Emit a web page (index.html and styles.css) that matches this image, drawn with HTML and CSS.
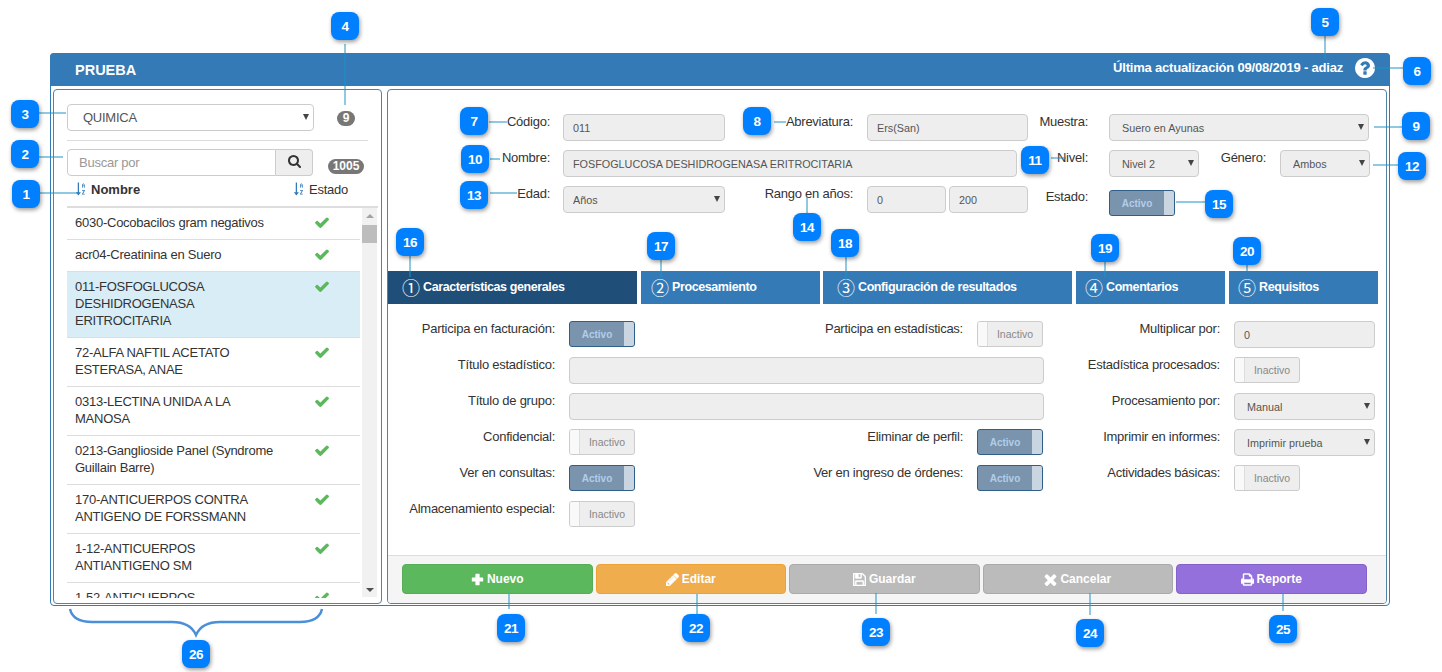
FILE: index.html
```html
<!DOCTYPE html>
<html>

<head>
	<meta charset="UTF-8">
	<title>Prueba</title>
	<link rel="stylesheet" href="styles.css">
</head>

<body>
	<svg class="defs" width="0" height="0">
		<symbol id="i-plus" viewBox="0 0 16 16"><path d="M6 1h4a.6.6 0 0 1 .6.6V5.400h3.800a.6.6 0 0 1 .6.6v4a.6.6 0 0 1-.6.6h-3.800v3.800a.6.6 0 0 1-.6.6H6a.6.6 0 0 1-.6-.6v-3.800H1.600A.6.6 0 0 1 1 10V6a.6.6 0 0 1 .6-.6h3.800V1.600A.6.6 0 0 1 6 1z" /></symbol>
		<symbol id="i-pencil" viewBox="0 0 1536 1536"><path d="M363 1408l91-91-235-235-91 91v107h128v128h107zm523-928q0-22-22-22-10 0-17 7l-542 542q-7 7-7 17 0 22 22 22 10 0 17-7l542-542q7-7 7-17zm-54-192l416 416-832 832h-416v-416zm683 96q0 53-37 90l-166 166-416-416 166-165q36-38 90-38 53 0 91 38l235 234q37 39 37 91z" /></symbol>
		<symbol id="i-save" viewBox="128 128 1536 1536"><path d="M512 1536h768v-384h-768v384zm896 0h128v-896q0-14-10-38.500t-20-34.500l-281-281q-10-10-34-20t-39-10v416q0 40-28 68t-68 28h-576q-40 0-68-28t-28-68v-416h-128v1280h128v-416q0-40 28-68t68-28h832q40 0 68 28t28 68v416zm-384-928v-320q0-13-9.500-22.500t-22.500-9.500h-192q-13 0-22.500 9.500t-9.500 22.500v320q0 13 9.500 22.500t22.500 9.500h192q13 0 22.500-9.500t9.500-22.500zm640 32v928q0 40-28 68t-68 28h-1344q-40 0-68-28t-28-68v-1344q0-40 28-68t68-28h928q40 0 88 20t76 48l280 280q28 28 48 76t20 88z" /></symbol>
		<symbol id="i-times" viewBox="240 240 1312 1312"><path d="M1490 1322q0 40-28 68l-136 136q-28 28-68 28t-68-28l-294-294-294 294q-28 28-68 28t-68-28l-136-136q-28-28-28-68t28-68l294-294-294-294q-28-28-28-68t28-68l136-136q28-28 68-28t68 28l294 294 294-294q28-28 68-28t68 28l136 136q28 28 28 68t-28 68l-294 294 294 294q28 28 28 68z" /></symbol>
		<symbol id="i-print" viewBox="64 128 1664 1536"><path d="M448 1536h896v-256h-896v256zm0-640h896v-384h-160q-40 0-68-28t-28-68v-160h-640v640zm1152 64q0-26-19-45t-45-19-45 19-19 45 19 45 45 19 45-19 19-45zm128 0v416q0 13-9.500 22.500t-22.500 9.500h-224v160q0 40-28 68t-68 28h-960q-40 0-68-28t-28-68v-160h-224q-13 0-22.500-9.500t-9.500-22.500v-416q0-79 56.500-135.500t135.500-56.500h64v-544q0-40 28-68t68-28h672q40 0 88 20t76 48l152 152q28 28 48 76t20 88v256h64q79 0 135.500 56.500t56.500 135.500z" /></symbol>
		<symbol id="i-search" viewBox="64 128 1664 1664"><path d="M1216 832q0-185-131.500-316.500t-316.500-131.500-316.500 131.500-131.500 316.500 131.500 316.500 316.500 131.500 316.500-131.500 131.500-316.500zm512 832q0 52-38 90t-90 38q-54 0-90-38l-343-342q-179 124-399 124-143 0-273.500-55.500t-225-150-150-225-55.500-273.500 55.500-273.500 150-225 225-150 273.500-55.500 273.500 55.500 225 150 150 225 55.500 273.500q0 220-124 399l343 343q37 37 37 90z" /></symbol>
		<symbol id="i-check" viewBox="120 300 1552 1200"><path d="M1671 566q0 40-28 68l-724 724-136 136q-28 28-68 28t-68-28l-136-136-362-362q-28-28-28-68t28-68l136-136q28-28 68-28t68 28l294 295 656-657q28-28 68-28t68 28l136 136q28 28 28 68z" /></symbol>
		<symbol id="i-help" viewBox="128 128 1536 1536"><path d="M1024 1376v-192q0-14-9-23t-23-9h-192q-14 0-23 9t-9 23v192q0 14 9 23t23 9h192q14 0 23-9t9-23zm256-672q0-88-55.500-163t-138.500-116-170-41q-243 0-371 213-15 24 8 42l132 100q7 6 19 6 16 0 25-12 53-68 86-92 34-24 86-24 48 0 85.500 26t37.500 59q0 38-20 61t-68 45q-63 28-115.500 86.500t-52.500 125.500v36q0 14 9 23t23 9h192q14 0 23-9t9-23q0-19 21.500-49.500t54.500-49.500q32-18 49-28.500t46-35 44.500-48 28-60.500 12.500-81zm384 192q0 209-103 385.500t-279.500 279.500-385.500 103-385.500-103-279.500-279.500-103-385.500 103-385.500 279.500-279.500 385.500-103 385.500 103 279.500 279.500 103 385.500z" /></symbol>
		<symbol id="i-sort" viewBox="0 0 12 14"><path d="M3 0h1.400v10.500H6.500L3.700 14 .9 10.500H3z" /><path d="M7.700 5.500V2.300L8.800 1h.8l1 1.300v3.200h-.8V4H8.500v1.500zM8.500 3.200h1.300v-.6l-.4-.7h-.5l-.4.7zM7.700 8h3v.9L8.800 12.200h1.900v.8h-3v-.9l1.900-3.300H7.700z" /></symbol>
	</svg>

	<div class="window">
		<div class="window-head">
			<span class="window-title">PRUEBA</span>
			<span class="window-info">Última actualización 09/08/2019 - adiaz</span>
			<svg class="help-icon"><use href="#i-help" /></svg>
		</div>
		<div class="window-body">
			<!-- lista de pruebas -->
			<div class="side">
				<div class="side-row">
					<div class="select side-select"><select><option>QUIMICA</option></select></div>
					<span class="badge badge-small">9</span>
				</div>
				<hr class="side-line">
				<div class="side-row">
					<div class="search">
						<input type="text" placeholder="Buscar por">
						<button><svg class="search-icon"><use href="#i-search" /></svg></button>
					</div>
					<span class="badge badge-big">1005</span>
				</div>
				<div class="list-head">
					<span class="list-name"><svg class="sort-icon"><use href="#i-sort" /></svg><b>Nombre</b></span>
					<span class="list-state"><svg class="sort-icon"><use href="#i-sort" /></svg>Estado</span>
				</div>
				<div class="list-wrap">
					<div class="list">
						<div class="item"><span>6030-Cocobacilos gram negativos</span><svg class="check"><use href="#i-check" /></svg></div>
						<div class="item"><span>acr04-Creatinina en Suero</span><svg class="check"><use href="#i-check" /></svg></div>
						<div class="item selected"><span>011-FOSFOGLUCOSA DESHIDROGENASA ERITROCITARIA</span><svg class="check"><use href="#i-check" /></svg></div>
						<div class="item"><span>72-ALFA NAFTIL ACETATO ESTERASA, ANAE</span><svg class="check"><use href="#i-check" /></svg></div>
						<div class="item"><span>0313-LECTINA UNIDA A LA MANOSA</span><svg class="check"><use href="#i-check" /></svg></div>
						<div class="item"><span>0213-Ganglioside Panel (Syndrome Guillain Barre)</span><svg class="check"><use href="#i-check" /></svg></div>
						<div class="item"><span>170-ANTICUERPOS CONTRA ANTIGENO DE FORSSMANN</span><svg class="check"><use href="#i-check" /></svg></div>
						<div class="item"><span>1-12-ANTICUERPOS ANTIANTIGENO SM</span><svg class="check"><use href="#i-check" /></svg></div>
						<div class="item"><span>1-52-ANTICUERPOS ANTINUCLEARES</span><svg class="check"><use href="#i-check" /></svg></div>
					</div>
					<div class="scrollbar">
						<span class="arrow-up"></span>
						<span class="thumb"></span>
						<span class="arrow-down"></span>
					</div>
				</div>
			</div>

			<!-- detalle de la prueba -->
			<div class="main">
				<div class="form-top">
					<label class="lb-a">Código:</label>
					<input type="text" value="011" disabled>
					<label class="lb-b">Abreviatura:</label>
					<input type="text" value="Ers(San)" disabled>
					<label class="lb-c">Muestra:</label>
					<div class="select"><select disabled><option>Suero en Ayunas</option></select></div>

					<label class="lb-a">Nombre:</label>
					<input class="name-input" type="text" value="FOSFOGLUCOSA DESHIDROGENASA ERITROCITARIA" disabled>
					<label class="lb-c">Nivel:</label>
					<div class="pair">
						<div class="select small-select"><select disabled><option>Nivel 2</option></select></div>
						<label class="gender-label">Género:</label>
						<div class="select small-select"><select disabled><option>Ambos</option></select></div>
					</div>

					<label class="lb-a">Edad:</label>
					<div class="select age-select"><select disabled><option>Años</option></select></div>
					<label class="lb-b">Rango en años:</label>
					<div class="range">
						<input type="text" value="0" disabled>
						<input type="text" value="200" disabled>
					</div>
					<label class="lb-c state-label">Estado:</label>
					<div class="switch on state-switch"><span>Activo</span><i></i></div>
				</div>

				<div class="tabs">
					<div class="tab tab-1 active"><span class="num">①</span>Características generales</div>
					<div class="tab tab-2"><span class="num">②</span>Procesamiento</div>
					<div class="tab tab-3"><span class="num">③</span>Configuración de resultados</div>
					<div class="tab tab-4"><span class="num">④</span>Comentarios</div>
					<div class="tab tab-5"><span class="num">⑤</span>Requisitos</div>
				</div>

				<div class="form-tab">
					<label>Participa en facturación:</label>
					<div class="switch on"><span>Activo</span><i></i></div>
					<label>Participa en estadísticas:</label>
					<div class="switch off"><i></i><span>Inactivo</span></div>
					<label>Multiplicar por:</label>
					<input type="text" value="0" disabled>

					<label>Título estadístico:</label>
					<input class="wide" type="text" disabled>
					<label>Estadística procesados:</label>
					<div class="switch off"><i></i><span>Inactivo</span></div>

					<label>Título de grupo:</label>
					<input class="wide" type="text" disabled>
					<label>Procesamiento por:</label>
					<div class="select"><select disabled><option>Manual</option></select></div>

					<label>Confidencial:</label>
					<div class="switch off"><i></i><span>Inactivo</span></div>
					<label>Eliminar de perfil:</label>
					<div class="switch on"><span>Activo</span><i></i></div>
					<label>Imprimir en informes:</label>
					<div class="select"><select disabled><option>Imprimir prueba</option></select></div>

					<label>Ver en consultas:</label>
					<div class="switch on"><span>Activo</span><i></i></div>
					<label>Ver en ingreso de órdenes:</label>
					<div class="switch on"><span>Activo</span><i></i></div>
					<label>Actividades básicas:</label>
					<div class="switch off"><i></i><span>Inactivo</span></div>

					<label>Almacenamiento especial:</label>
					<div class="switch off"><i></i><span>Inactivo</span></div>
				</div>

				<div class="actions">
					<button class="btn green"><svg><use href="#i-plus" /></svg>Nuevo</button>
					<button class="btn orange"><svg class="thick"><use href="#i-pencil" /></svg>Editar</button>
					<button class="btn grey"><svg class="thick"><use href="#i-save" /></svg>Guardar</button>
					<button class="btn grey"><svg><use href="#i-times" /></svg>Cancelar</button>
					<button class="btn purple"><svg class="thick"><use href="#i-print" /></svg>Reporte</button>
				</div>
			</div>
		</div>
	</div>

	<!-- anotaciones sobre la captura -->
	<svg class="wires" width="1442" height="672">
		<path d="M40 193H78M39 157H63M39 113H66M345 44V105M1325 36V60M1373 68H1403M489 122H507M774 122H786M1374 127H1403M490 159H500M1051 158H1066M1373 165H1398M490 193H517M807 197V213M1176 202H1205M410 255V277M661 260V277M846 257V280M1105 262V277M1247 265V271M509 594V609M697 594V614M876 593V614M1090 593V615M1283 593V611" />
		<path class="brace" d="M70 609C72 618 80 622 92 622H172C184 622 192 626 196 635C200 626 208 622 220 622H300C312 622 320 618 322 609" />
	</svg>
	<span class="pin p1">1</span>
	<span class="pin p2">2</span>
	<span class="pin p3">3</span>
	<span class="pin p4">4</span>
	<span class="pin p5">5</span>
	<span class="pin p6">6</span>
	<span class="pin p7">7</span>
	<span class="pin p8">8</span>
	<span class="pin p9">9</span>
	<span class="pin p10">10</span>
	<span class="pin p11">11</span>
	<span class="pin p12">12</span>
	<span class="pin p13">13</span>
	<span class="pin p14">14</span>
	<span class="pin p15">15</span>
	<span class="pin p16">16</span>
	<span class="pin p17">17</span>
	<span class="pin p18">18</span>
	<span class="pin p19">19</span>
	<span class="pin p20">20</span>
	<span class="pin p21">21</span>
	<span class="pin p22">22</span>
	<span class="pin p23">23</span>
	<span class="pin p24">24</span>
	<span class="pin p25">25</span>
	<span class="pin p26">26</span>
</body>

</html>
```

FILE: styles.css
```css
* {
	box-sizing: border-box;
}

html,
body {
	height: 672px;
	overflow: hidden;
}

body {
	position: relative;
	margin: 0;
	padding: 53px 0 0 50px;
	background: #fff;
	color: #333;
	font-family: "Liberation Sans", Arial, sans-serif;
	font-size: 13px;
	letter-spacing: -0.25px;
}

.defs {
	position: absolute;
}

/* ventana */
.window {
	width: 1340px;
	height: 553px;
	border: 1px solid #337ab7;
	border-radius: 4px;
	display: flex;
	flex-direction: column;
}

.window-head {
	height: 33px;
	flex: none;
	margin: -1px -1px 0;
	background: #337ab7;
	border-radius: 4px 4px 0 0;
	color: #fff;
	font-weight: bold;
	display: flex;
	align-items: center;
	padding-left: 25px;
}

.window-title {
	font-size: 14.500px;
	letter-spacing: 0;
}

.window-info {
	margin-left: auto;
	font-size: 13px;
	letter-spacing: -0.200px;
	margin-top: -4px;
}

.help-icon {
	width: 20px;
	height: 20px;
	margin: -3px 15px 0 12px;
	fill: #fff;
}

.window-body {
	flex: 1;
	display: flex;
	gap: 5px;
	padding: 3px 2px 1px 2px;
	min-height: 0;
}

/* panel izquierdo */
.side {
	width: 329px;
	flex: none;
	border: 1px solid #4f83a8;
	border-radius: 4px;
	padding: 14px 3px 5px 13px;
	display: flex;
	flex-direction: column;
}

.side-row {
	display: flex;
	align-items: center;
	height: 27px;
}

.side-select {
	width: 247px;
	height: 27px;
	flex: none;
}

.select.side-select select {
	background: #fff;
	font-size: 13px;
	letter-spacing: -0.250px;
	padding-left: 15px;
	color: #555;
}

.badge {
	background: #777;
	color: #fff;
	font-size: 12px;
	font-weight: bold;
	letter-spacing: 0;
	border-radius: 10px;
	text-align: center;
	line-height: 15px;
	height: 15px;
}

.badge-small {
	width: 18px;
	margin: 2px 0 0 23px;
}

.badge-big {
	width: 36px;
	margin: 8px 0 0 15px;
}

.side-line {
	width: 301px;
	margin: 9px 0 8px;
	border: 0;
	border-top: 1px solid #ddd;
}

.search {
	width: 246px;
	height: 27px;
	display: flex;
	flex: none;
}

.search input[type="text"] {
	flex: 1;
	min-width: 0;
	height: 27px;
	background: #fff;
	border-radius: 4px 0 0 4px;
	padding: 0 11px;
	font-size: 13px;
	letter-spacing: -0.250px;
}

.search input::placeholder {
	color: #999;
}

.search button {
	width: 37px;
	height: 27px;
	flex: none;
	border: 1px solid #ccc;
	border-left: 0;
	border-radius: 0 4px 4px 0;
	background: #eee;
	padding: 0;
}

.search-icon {
	width: 13px;
	height: 13px;
	fill: #333;
}

.list-head {
	display: flex;
	height: 30px;
	padding-bottom: 4px;
	align-items: center;
}

.list-name {
	width: 226px;
	padding-left: 8px;
	display: flex;
	align-items: center;
	gap: 5px;
	letter-spacing: 0;
}

.list-state {
	display: flex;
	align-items: center;
	gap: 5px;
}

.sort-icon {
	width: 11px;
	height: 14px;
	fill: #337ab7;
}

.list-wrap {
	flex: 1;
	display: flex;
	min-height: 0;
	overflow: hidden;
	border-top: 2px solid #ddd;
}

.list {
	width: 293px;
	flex: none;
	height: 390px;
	overflow: hidden;
}

.item {
	display: flex;
	justify-content: space-between;
	line-height: 17px;
	padding: 6px 31px 8px 8px;
	border-bottom: 1px solid #ddd;
}

.item span {
	width: 205px;
}

.item.selected {
	background: #d9edf7;
}

.check {
	width: 14px;
	height: 11px;
	margin-top: 3px;
	fill: #5cb85c;
}

.scrollbar {
	width: 15px;
	margin-left: 2px;
	background: #f1f1f1;
	height: 389px;
	display: flex;
	flex-direction: column;
	align-items: center;
}

.arrow-up,
.arrow-down {
	width: 0;
	height: 0;
	border-left: 4px solid transparent;
	border-right: 4px solid transparent;
}

.arrow-up {
	border-bottom: 4px solid #a3a3a3;
	margin-top: 6px;
}

.arrow-down {
	border-top: 4px solid #505050;
	margin: auto 0 5px;
}

.thumb {
	width: 100%;
	height: 18px;
	background: #bdbdbd;
	margin-top: 7px;
}

/* panel derecho */
.main {
	width: 1000px;
	flex: none;
	border: 1px solid #4f83a8;
	border-radius: 4px;
	display: flex;
	flex-direction: column;
	overflow: hidden;
}

label {
	text-align: right;
	line-height: 16px;
}

input[type="text"],
.select select {
	height: 27px;
	width: 100%;
	border: 1px solid #ccc;
	border-radius: 4px;
	background: #eee;
	color: #555;
	font: 10.800px "Liberation Sans", Arial, sans-serif;
	padding: 0 9px;
	opacity: 1;
}

.select {
	position: relative;
}

.select select {
	appearance: none;
	padding-left: 12px;
}

.age-select select {
	padding-left: 9px;
}

.select::after {
	content: "";
	position: absolute;
	right: 5px;
	top: 10px;
	border-left: 3px solid transparent;
	border-right: 3px solid transparent;
	border-top: 6px solid #444;
	pointer-events: none;
}

.form-top {
	margin-top: 24px;
	display: grid;
	grid-template-columns: 175px 162px 142px 161px 81px 260px;
	grid-auto-rows: 27px;
	row-gap: 9px;
	height: 99px;
	flex: none;
}

.lb-a {
	padding-right: 13px;
}

.lb-b {
	padding-right: 14px;
}

.lb-c {
	padding-right: 21px;
}

.name-input {
	grid-column: span 3;
	width: 454px !important;
}

.pair {
	display: flex;
	width: 261px;
}

.small-select {
	width: 90px;
	flex: none;
}

.gender-label {
	width: 81px;
	padding-right: 14px;
	flex: none;
}

.range {
	display: flex;
	gap: 3px;
}

.range input[type="text"] {
	width: 79px;
}

.state-label {
	margin-top: 3px;
}

.state-switch {
	margin-top: 4px;
}

/* pestañas */
.tabs {
	display: flex;
	margin-top: 58px;
	height: 33px;
	flex: none;
}

.tab {
	background: #337ab7;
	color: #fff;
	font-size: 12.500px;
	letter-spacing: -0.400px;
	font-weight: bold;
	display: flex;
	align-items: center;
	padding: 0 0 1px 14px;
	white-space: nowrap;
}

.tab.active {
	background: #1f4e79;
}

.tab-1 {
	width: 249px;
	margin-right: 4px;
}

.tab-2 {
	width: 179px;
	margin-right: 3px;
	padding-left: 10px;
}

.tab-3 {
	width: 249px;
	margin-right: 4px;
}

.tab-4 {
	width: 149px;
	margin-right: 4px;
	padding-left: 9px;
}

.tab-5 {
	width: 149px;
	padding-left: 9px;
}

.num {
	font: normal 18px "Noto Sans CJK JP", sans-serif;
	letter-spacing: 0;
	line-height: 20px;
	width: 21px;
}

/* formulario de la pestaña */
.form-tab {
	margin-top: 17px;
	display: grid;
	grid-template-columns: 181px 66px 342px 67px 190px 141px;
	grid-auto-rows: 27px;
	row-gap: 9px;
	align-items: start;
	flex: 1;
}

.form-tab > label {
	padding-right: 14px;
}

.form-tab > .wide {
	grid-column: span 3;
}

.switch {
	width: 66px;
	height: 26px;
	border-radius: 3px;
	display: flex;
	font-size: 10.500px;
	letter-spacing: 0;
	overflow: hidden;
}

.switch span {
	flex: 1;
	text-align: center;
	line-height: 25px;
}

.switch i {
	width: 10px;
	flex: none;
}

.switch.on {
	background: #7a94ad;
	border: 1px solid #2f5f88;
	color: #b3cde8;
	font-size: 10px;
	font-weight: bold;
}

.switch.on i {
	background: #c9d6e1;
}

.switch.off {
	background: #eee;
	border: 1px solid #ccc;
	color: #888;
}

.switch.off i {
	background: #f9f9f9;
	border-right: 1px solid #ddd;
}

/* botones */
.actions {
	height: 48px;
	flex: none;
	background: #f5f5f5;
	border-top: 1px solid #ddd;
	display: flex;
	gap: 3px;
	padding: 8px 0 0 14px;
}

.btn {
	width: 190.500px;
	height: 30px;
	border: 1px solid transparent;
	border-radius: 4px;
	color: #fff;
	font: bold 12px "Liberation Sans", Arial, sans-serif;
	letter-spacing: 0;
	display: flex;
	align-items: center;
	justify-content: center;
	gap: 3px;
	padding: 0;
}

.btn svg {
	width: 13px;
	height: 13px;
	fill: #fff;
}

.btn .thick {
	stroke: #fff;
	stroke-width: 60;
}

.green {
	background: #5cb85c;
	border-color: #57ad57;
}

.orange {
	background: #f0ad4e;
	border-color: #eea236;
}

.grey {
	background: #bbb;
	border-color: #aaa;
}

.purple {
	background: #9370db;
	border-color: #8562c8;
}

/* anotaciones */
.wires {
	position: absolute;
	left: 0;
	top: 0;
	fill: none;
	stroke: #1f93c4;
	stroke-width: 1;
	pointer-events: none;
}

.brace {
	stroke: #4a90d9;
	stroke-width: 2.500;
}

.pin {
	position: absolute;
	width: 28px;
	height: 28px;
	border-radius: 8px;
	background: #0080ff;
	color: #fff;
	font-size: 13.500px;
	font-weight: bold;
	letter-spacing: -0.500px;
	display: flex;
	align-items: center;
	justify-content: center;
	box-shadow: 1px 2px 4px rgba(0, 0, 0, 0.4);
}

.p1 { left: 12px; top: 180px; }
.p2 { left: 11px; top: 140px; }
.p3 { left: 11px; top: 100px; }
.p4 { left: 331px; top: 12px; }
.p5 { left: 1311px; top: 8px; }
.p6 { left: 1403px; top: 57px; }
.p7 { left: 460px; top: 107px; }
.p8 { left: 743px; top: 107px; }
.p9 { left: 1402px; top: 112px; }
.p10 { left: 461px; top: 145px; }
.p11 { left: 1021px; top: 146px; }
.p12 { left: 1398px; top: 152px; }
.p13 { left: 460px; top: 181px; }
.p14 { left: 793px; top: 213px; }
.p15 { left: 1205px; top: 190px; }
.p16 { left: 396px; top: 228px; }
.p17 { left: 647px; top: 232px; }
.p18 { left: 831px; top: 229px; }
.p19 { left: 1091px; top: 234px; }
.p20 { left: 1233px; top: 237px; }
.p21 { left: 497px; top: 614px; }
.p22 { left: 682px; top: 614px; }
.p23 { left: 862px; top: 618px; }
.p24 { left: 1076px; top: 619px; }
.p25 { left: 1269px; top: 615px; }
.p26 { left: 182px; top: 640px; }
```
